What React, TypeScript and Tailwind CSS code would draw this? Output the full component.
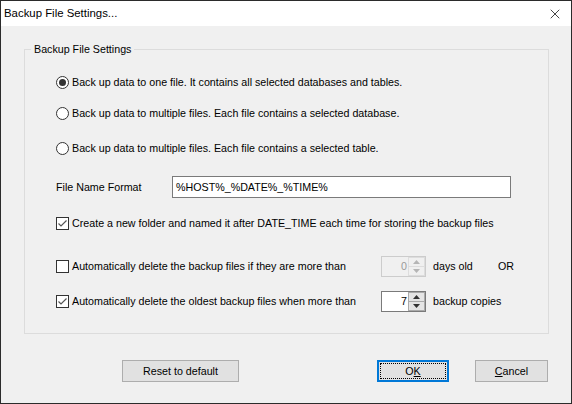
import { X } from "lucide-react";

function Radio({ checked }: { checked?: boolean }) {
  return (
    <span className="flex h-[13px] w-[13px] shrink-0 items-center justify-center rounded-full border border-[#333] bg-white">
      {checked && <span className="h-[7px] w-[7px] rounded-full bg-[#333]" />}
    </span>
  );
}

function Check({ checked }: { checked?: boolean }) {
  return (
    <span className="flex h-[13px] w-[13px] shrink-0 items-center justify-center border border-[#333] bg-white">
      {checked && (
        <svg width="11" height="11" viewBox="0 0 11 11">
          <path d="M1.5 5.5 L4 8 L9.5 2.5" fill="none" stroke="#555" strokeWidth="1.2" />
        </svg>
      )}
    </span>
  );
}

function Spinner({ value, disabled }: { value: string; disabled?: boolean }) {
  const arrow = disabled ? "#b5b5b5" : "#333";
  return (
    <div
      className={`flex h-[21px] w-[45px] border ${
        disabled ? "border-[#ccc] bg-[#f0f0f0] text-[#9a9a9a]" : "border-[#7a7a7a] bg-white text-black"
      }`}
    >
      <span className="flex-1 pr-[1px] text-right leading-[19px]">{value}</span>
      <div className="flex w-[17px] flex-col">
        <div className={`flex flex-1 items-center justify-center border ${disabled ? "border-[#ddd] bg-[#f0f0f0]" : "border-[#aaa] bg-[#e5e5e5]"}`}>
          <svg width="7" height="4" viewBox="0 0 7 4">
            <path d="M0 4 L3.5 0 L7 4 Z" fill={arrow} />
          </svg>
        </div>
        <div className={`flex flex-1 items-center justify-center border border-t-0 ${disabled ? "border-[#ddd] bg-[#f0f0f0]" : "border-[#aaa] bg-[#e5e5e5]"}`}>
          <svg width="7" height="4" viewBox="0 0 7 4">
            <path d="M0 0 L3.5 4 L7 0 Z" fill={arrow} />
          </svg>
        </div>
      </div>
    </div>
  );
}

export default function App() {
  const radios = [
    { label: "Back up data to one file. It contains all selected databases and tables.", checked: true, mt: "mt-[25px]" },
    { label: "Back up data to multiple files. Each file contains a selected database.", mt: "mt-[17px]" },
    { label: "Back up data to multiple files. Each file contains a selected table.", mt: "mt-[21px]" },
  ];

  return (
    <div className="flex h-[404px] w-[572px] flex-col border border-[#2b2b2b] bg-[#f0f0f0] font-['Liberation_Sans',Arial,sans-serif] text-[10.7px] text-black">
      {/* Title bar */}
      <div className="flex h-[25px] shrink-0 items-center justify-between bg-white pl-[3px] pr-[8px]">
        <span className="text-[11.4px]">Backup File Settings...</span>
        <X className="h-[16px] w-[16px]" strokeWidth={1.1} />
      </div>

      {/* Group box */}
      <div className="relative ml-[23px] mt-[23px] h-[285px] w-[525px] border border-[#dcdcdc]">
        <span className="absolute -top-[8px] left-[6px] bg-[#f0f0f0] px-[3px] leading-[14px]">Backup File Settings</span>

        <div className="flex flex-col pl-[31px]">
          {radios.map((r, i) => (
            <label key={i} className={`flex h-[14px] items-center gap-[3px] ${r.mt}`}>
              <Radio checked={r.checked} />
              <span>{r.label}</span>
            </label>
          ))}

          <div className="mt-[21px] flex h-[22px] items-center">
            <span className="w-[116px]">File Name Format</span>
            <div className="flex h-[22px] w-[339px] items-center border border-[#7a7a7a] bg-white px-[3px]">%HOST%_%DATE%_%TIME%</div>
          </div>

          <label className="mt-[18px] flex h-[14px] items-center gap-[3px]">
            <Check checked />
            <span>Create a new folder and named it after DATE_TIME each time for storing the backup files</span>
          </label>

          <div className="mt-[26px] flex h-[21px] items-center">
            <label className="flex w-[325px] items-center gap-[3px]">
              <Check />
              <span>Automatically delete the backup files if they are more than</span>
            </label>
            <Spinner value="0" disabled />
            <span className="ml-[7px] w-[65px]">days old</span>
            <span>OR</span>
          </div>

          <div className="mt-[14px] flex h-[21px] items-center">
            <label className="flex w-[325px] items-center gap-[3px]">
              <Check checked />
              <span>Automatically delete the oldest backup files when more than</span>
            </label>
            <Spinner value="7" />
            <span className="ml-[7px]">backup copies</span>
          </div>
        </div>
      </div>

      {/* Buttons */}
      <div className="mt-[26px] flex h-[22px] items-center pl-[121px] pr-[23px]">
        <button className="h-[22px] w-[117px] border border-[#adadad] bg-[#e1e1e1]">Reset to default</button>
        <div className="flex-1" />
        <button className="relative h-[22px] w-[72px] border-2 border-[#0078d7] bg-[#e1e1e1]">
          <span className="absolute inset-[1px] border border-dotted border-black" />
          O<span className="underline">K</span>
        </button>
        <button className="ml-[26px] h-[22px] w-[73px] border border-[#adadad] bg-[#e1e1e1]">
          <span className="underline">C</span>ancel
        </button>
      </div>
    </div>
  );
}
